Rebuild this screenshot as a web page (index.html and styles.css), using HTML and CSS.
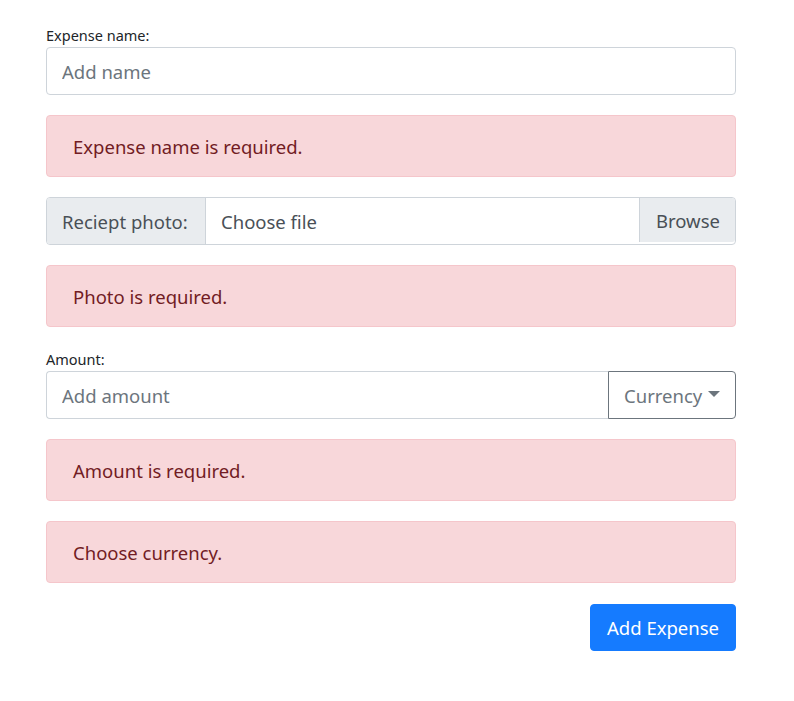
FILE: index.html
```html
<!DOCTYPE html>
<html>
<head>
<meta charset="utf-8">
<link rel="stylesheet" href="styles.css">
</head>
<body>
<form class="form">
  <label class="label">Expense name:</label>
  <input class="input" type="text" placeholder="Add name">
  <div class="alert">Expense name is required.</div>

  <div class="file-group">
    <span class="addon">Reciept photo:</span>
    <span class="file-name">Choose file</span>
    <span class="browse">Browse</span>
  </div>
  <div class="alert">Photo is required.</div>

  <label class="label label-gap">Amount:</label>
  <div class="amount-group">
    <input class="input amount-input" type="text" placeholder="Add amount">
    <button type="button" class="currency">Currency<span class="caret"></span></button>
  </div>
  <div class="alert">Amount is required.</div>
  <div class="alert">Choose currency.</div>

  <div class="actions">
    <button type="button" class="submit">Add Expense</button>
  </div>
</form>
</body>
</html>
```

FILE: styles.css
```css
* { box-sizing: border-box; }
html, body { margin: 0; padding: 0; background: #fff; }
body {
  font-family: "Segoe UI", "Noto Sans", "Open Sans", sans-serif;
  color: #212529;
}
.form {
  width: 690px;
  margin: 23px 0 0 46px;
  display: flex;
  flex-direction: column;
}
.label {
  font-size: 14.5px;
  line-height: 24px;
  color: #212529;
  white-space: nowrap;
}
.label-gap { margin-top: 20px; }
.input {
  display: block;
  width: 100%;
  height: 48px;
  padding: 0 15px;
  font-family: inherit;
  font-size: 18.5px;
  color: #495057;
  border: 1px solid #ced4da;
  border-radius: 4px;
  background: #fff;
  outline: none;
}
.input::placeholder { color: #6c757d; opacity: 1; }
.alert {
  margin-top: 20px;
  height: 62px;
  padding: 0 26px;
  display: flex;
  align-items: center;
  font-size: 18.5px;
  color: #721c24;
  background: #f8d7da;
  border: 1px solid #f5c6cb;
  border-radius: 4px;
  white-space: nowrap;
}
.file-group {
  margin-top: 20px;
  height: 48px;
  display: flex;
  border: 1px solid #ced4da;
  border-radius: 4px;
  font-size: 18.5px;
  color: #495057;
  overflow: hidden;
  white-space: nowrap;
}
.addon {
  display: flex;
  align-items: center;
  padding: 0 15px;
  background: #e9ecef;
  border-right: 1px solid #ced4da;
  width: 159px;
  flex-shrink: 0;
}
.file-name {
  flex: 1;
  display: flex;
  align-items: center;
  padding: 0 15px;
}
.browse {
  display: flex;
  align-items: center;
  padding: 0 16px;
  width: 96px;
  flex-shrink: 0;
  background: #e9ecef;
  border-left: 1px solid #ced4da;
  margin: 0 0 2px 0;
  border-radius: 0 3px 3px 0;
}
.amount-group {
  display: flex;
  height: 48px;
}
.amount-input {
  flex: 1;
  border-radius: 4px 0 0 4px;
  border-right: none;
}
.currency {
  width: 128px;
  height: 48px;
  display: flex;
  align-items: center;
  padding: 0 12px 0 15px;
  font-family: inherit;
  font-size: 18.5px;
  color: #6c757d;
  background: #fff;
  border: 1px solid #6c757d;
  border-radius: 0 4px 4px 0;
  white-space: nowrap;
  cursor: pointer;
}
.caret {
  display: inline-block;
  margin-left: 6px;
  margin-top: -2px;
  border-top: 6px solid #6c757d;
  border-left: 6px solid transparent;
  border-right: 6px solid transparent;
}
.actions {
  margin-top: 21px;
  display: flex;
  justify-content: flex-end;
}
.submit {
  height: 47px;
  width: 146px;
  padding: 0;
  font-family: inherit;
  font-size: 18.5px;
  color: #fff;
  background: #157bff;
  border: 1px solid #157bff;
  border-radius: 4px;
  white-space: nowrap;
  cursor: pointer;
}
```
